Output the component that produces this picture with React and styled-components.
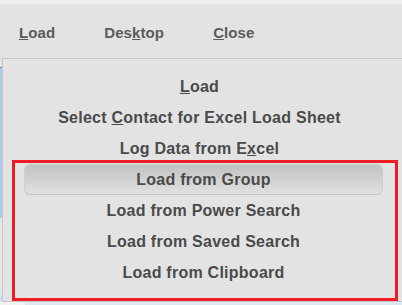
import React from "react";
import styled, { createGlobalStyle } from "styled-components";

const GlobalStyle = createGlobalStyle`
  html, body {
    margin: 0;
    padding: 0;
    width: 402px;
    height: 305px;
    overflow: hidden;
    background: #e3e3e3;
  }
  * { box-sizing: border-box; }
`;

const Page = styled.div`
  position: relative;
  width: 402px;
  height: 305px;
  overflow: hidden;
  display: flex;
  flex-direction: column;
  font-family: "Liberation Sans", Arial, sans-serif;
  font-weight: bold;
`;

const TitleStrip = styled.div`
  height: 4px;
  background: #efefef;
`;

const MenuBar = styled.nav`
  height: 54px;
  background: #e3e3e3;
  display: flex;
  align-items: flex-start;
  gap: 49px;
  padding: 20px 0 0 19px;
`;

const MenuButton = styled.span`
  font-size: 15px;
  line-height: 17px;
  color: #5b5b5b;
  white-space: nowrap;
  letter-spacing: 0.1px;
  cursor: default;
`;

const Workspace = styled.div`
  flex: 1;
  display: flex;
`;

const LeftPane = styled.div`
  width: 25px;
  background: #f2f2f2;
  display: flex;
`;

const EdgeStrip = styled.div`
  width: 2px;
  display: flex;
  flex-direction: column;
`;

const EdgeSegment = styled.div`
  height: ${(p) => p.$h}px;
  background: ${(p) => p.$c};
  flex: ${(p) => (p.$grow ? 1 : "none")};
`;

const MainPane = styled.div`
  flex: 1;
  background: #dde8f2;
`;

const Dropdown = styled.div`
  position: absolute;
  top: 58px;
  left: 2px;
  width: 402px;
  height: 244px;
  background: #e3e3e3;
  border-top: 1px solid #c8c8c8;
  border-left: 1px solid #c8c8c8;
  border-bottom: 1px solid #c8c8c8;
  padding-top: 12px;
  display: flex;
  flex-direction: column;
  align-items: flex-start;
`;

const ItemList = styled.div`
  width: 393px;
  display: flex;
  flex-direction: column;
`;

const Item = styled.div`
  height: 31px;
  line-height: ${(p) => (p.$active ? 30 : 32)}px;
  font-size: 16px;
  color: #4a4a4a;
  text-align: center;
  white-space: nowrap;
  letter-spacing: 0.25px;
  border-radius: 6px;
  border: ${(p) => (p.$active ? "1px solid #cdcdcd" : "none")};
  border-bottom-color: ${(p) => (p.$active ? "#c2c2c2" : "transparent")};
  background: ${(p) =>
    p.$active ? "linear-gradient(to bottom, #c1c1c1 0%, #d3d3d3 55%, #e0e0e0 100%)" : "transparent"};
  cursor: default;
`;

const Group = styled.div`
  margin: -4px 0 0 9px;
  width: 386px;
  height: 141px;
  border: 3px solid #ee1c24;
  padding: 1px 12px 10px 9px;
  display: flex;
  flex-direction: column;
`;

const topItems = [
  { key: "load", node: (<><u>L</u>oad</>) },
  { key: "select", node: (<>Select <u>C</u>ontact for Excel Load Sheet</>) },
  { key: "log", node: (<>Log Data from E<u>x</u>cel</>) },
];

const groupItems = [
  "Load from Group",
  "Load from Power Search",
  "Load from Saved Search",
  "Load from Clipboard",
];

const edge = [
  { h: 9, c: "#e3e3e3" },
  { h: 1, c: "#8c8c8c" },
  { h: 150, c: "#a9c9ec" },
  { h: 77, c: "#e6e6e6" },
  { h: 6, c: "#c6dcf0" },
];

export default function App() {
  return (
    <>
      <GlobalStyle />
      <Page>
        <TitleStrip />
        <MenuBar>
          <MenuButton><u>L</u>oad</MenuButton>
          <MenuButton>Des<u>k</u>top</MenuButton>
          <MenuButton><u>C</u>lose</MenuButton>
        </MenuBar>
        <Workspace>
          <LeftPane>
            <EdgeStrip>
              {edge.map((s, i) => (
                <EdgeSegment key={i} $h={s.h} $c={s.c} />
              ))}
              <EdgeSegment $h={0} $c="#f2f2f2" $grow />
            </EdgeStrip>
          </LeftPane>
          <MainPane />
        </Workspace>
        <Dropdown>
          <ItemList>
            {topItems.map((it) => (
              <Item key={it.key}>{it.node}</Item>
            ))}
          </ItemList>
          <Group>
            {groupItems.map((t, i) => (
              <Item key={t} $active={i === 0}>{t}</Item>
            ))}
          </Group>
        </Dropdown>
      </Page>
    </>
  );
}
